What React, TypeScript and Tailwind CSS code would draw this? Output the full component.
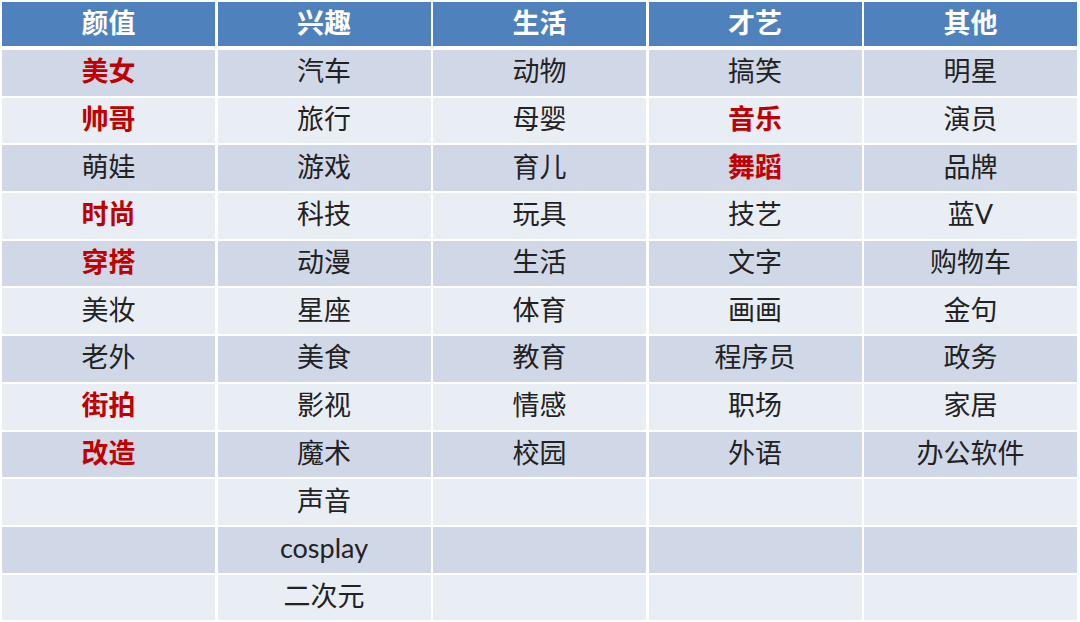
import React from "react";

type Cell = { text: string; hot?: boolean };

const headers = ["颜值", "兴趣", "生活", "才艺", "其他"];

const columns: Cell[][] = [
  [
    { text: "美女", hot: true },
    { text: "帅哥", hot: true },
    { text: "萌娃" },
    { text: "时尚", hot: true },
    { text: "穿搭", hot: true },
    { text: "美妆" },
    { text: "老外" },
    { text: "街拍", hot: true },
    { text: "改造", hot: true },
  ],
  [
    { text: "汽车" },
    { text: "旅行" },
    { text: "游戏" },
    { text: "科技" },
    { text: "动漫" },
    { text: "星座" },
    { text: "美食" },
    { text: "影视" },
    { text: "魔术" },
    { text: "声音" },
    { text: "cosplay" },
    { text: "二次元" },
  ],
  [
    { text: "动物" },
    { text: "母婴" },
    { text: "育儿" },
    { text: "玩具" },
    { text: "生活" },
    { text: "体育" },
    { text: "教育" },
    { text: "情感" },
    { text: "校园" },
  ],
  [
    { text: "搞笑" },
    { text: "音乐", hot: true },
    { text: "舞蹈", hot: true },
    { text: "技艺" },
    { text: "文字" },
    { text: "画画" },
    { text: "程序员" },
    { text: "职场" },
    { text: "外语" },
  ],
  [
    { text: "明星" },
    { text: "演员" },
    { text: "品牌" },
    { text: "蓝V" },
    { text: "购物车" },
    { text: "金句" },
    { text: "政务" },
    { text: "家居" },
    { text: "办公软件" },
  ],
];

const ROWS = 12;

const App = () => {
  return (
    <div className="w-[1080px] h-[622px] overflow-hidden bg-white pl-[2px] pt-[2px] font-['Lato','Noto_Sans_CJK_SC',sans-serif]">
      <div className="w-[1075px] flex flex-col">
        {/* header */}
        <div className="grid grid-cols-5 gap-x-[2.5px] h-[44px]">
          {headers.map((h) => (
            <div
              key={h}
              className="bg-[#4f81bd] text-white font-bold text-[27px] leading-none flex items-center justify-center pb-[3px]"
            >
              {h}
            </div>
          ))}
        </div>
        {/* body */}
        <div className="grid grid-cols-5 gap-x-[2.5px] gap-y-[2px] mt-[4px] auto-rows-[45.7px]">
          {Array.from({ length: ROWS }).map((_, r) =>
            columns.map((col, c) => {
              const cell = col[r];
              return (
                <div
                  key={`${r}-${c}`}
                  className={`${r % 2 === 0 ? "bg-[#d0d8e8]" : "bg-[#e9edf4]"} flex items-center justify-center pb-[4px] text-[27px] leading-none ${
                    cell?.hot ? "text-[#c00000] font-bold" : "text-[#222222]"
                  }`}
                >
                  {cell?.text}
                </div>
              );
            })
          )}
        </div>
      </div>
    </div>
  );
};

export default App;
